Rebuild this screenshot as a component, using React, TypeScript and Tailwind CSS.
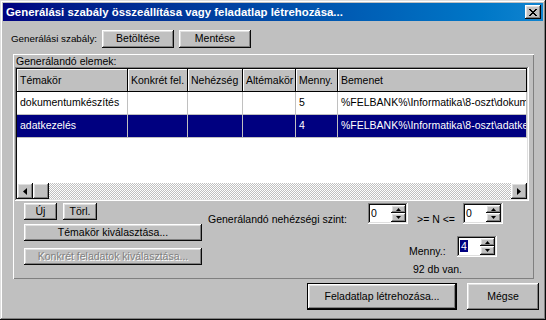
import React from "react";

const frame =
  "shadow-[inset_-1px_-1px_#0a0a0a,inset_1px_1px_#dfdfdf,inset_-2px_-2px_#808080,inset_2px_2px_#ffffff]";
const raised =
  "shadow-[inset_-1px_-1px_#0a0a0a,inset_1px_1px_#ffffff,inset_-2px_-2px_#808080,inset_2px_2px_#dfdfdf]";
const sunken =
  "shadow-[inset_-1px_-1px_#ffffff,inset_1px_1px_#808080,inset_-2px_-2px_#dfdfdf,inset_2px_2px_#0a0a0a]";
const panel = "shadow-[inset_1px_1px_#ffffff,inset_-1px_-1px_#808080]";

const columns = [
  { name: "Témakör", w: "w-[111px]" },
  { name: "Konkrét fel.", w: "w-[60px]" },
  { name: "Nehézség", w: "w-[55px]" },
  { name: "Altémakör", w: "w-[53px]" },
  { name: "Menny.", w: "w-[42px]" },
  { name: "Bemenet", w: "flex-1 min-w-0" },
];

const rows = [
  ["dokumentumkészítés", "", "", "", "5", "%FELBANK%\\Informatika\\8-oszt\\dokumentumkészítés"],
  ["adatkezelés", "", "", "", "4", "%FELBANK%\\Informatika\\8-oszt\\adatkezelés"],
];

function Button({
  className = "",
  disabled = false,
  isDefault = false,
  children,
}: {
  className?: string;
  disabled?: boolean;
  isDefault?: boolean;
  children: React.ReactNode;
}) {
  return (
    <div
      className={`flex shrink-0 items-center justify-center bg-[#c0c0c0] whitespace-nowrap ${
        isDefault ? "border border-black" : ""
      } ${raised} ${disabled ? "text-[#808080] [text-shadow:1px_1px_0_#ffffff]" : ""} ${className}`}
    >
      {children}
    </div>
  );
}

function Triangle({ dir }: { dir: "up" | "down" | "left" | "right" }) {
  const pts = {
    up: "2.5,0 5,3 0,3",
    down: "0,0 5,0 2.5,3",
    left: "4,0 4,7 0,3.5",
    right: "0,0 4,3.5 0,7",
  }[dir];
  const vertical = dir === "up" || dir === "down";
  return (
    <svg width={vertical ? 5 : 4} height={vertical ? 3 : 7} viewBox={vertical ? "0 0 5 3" : "0 0 4 7"}>
      <polygon points={pts} fill="#000" />
    </svg>
  );
}

function CloseGlyph() {
  const px = [
    [0, 0], [1, 0], [6, 0], [7, 0],
    [1, 1], [2, 1], [5, 1], [6, 1],
    [2, 2], [3, 2], [4, 2], [5, 2],
    [3, 3], [4, 3],
    [2, 4], [3, 4], [4, 4], [5, 4],
    [1, 5], [2, 5], [5, 5], [6, 5],
    [0, 6], [1, 6], [6, 6], [7, 6],
  ];
  return (
    <svg width="8" height="7" viewBox="0 0 8 7" shapeRendering="crispEdges">
      {px.map(([x, y]) => (
        <rect key={`${x}-${y}`} x={x} y={y} width="1" height="1" fill="#000" />
      ))}
    </svg>
  );
}

function Spin({ value, selected = false }: { value: string; selected?: boolean }) {
  return (
    <div className={`flex h-[21px] w-[40px] shrink-0 bg-white p-[2px] ${sunken}`}>
      <div className="flex-1 pl-[1px] pt-[1px] leading-[14px]">
        {selected ? <span className="bg-[#000080] px-[1px] text-white">{value}</span> : value}
      </div>
      <div className="flex w-[15px] flex-col">
        <div className={`flex h-[8px] items-center justify-center bg-[#c0c0c0] ${raised}`}>
          <Triangle dir="up" />
        </div>
        <div className={`flex flex-1 items-center justify-center bg-[#c0c0c0] ${raised}`}>
          <Triangle dir="down" />
        </div>
      </div>
    </div>
  );
}

function Grid() {
  return (
    <div className={`ml-[2px] flex h-[134px] w-[514px] flex-col bg-white p-[2px] ${sunken}`}>
      {/* header */}
      <div className="flex h-[23px]">
        {columns.map((c) => (
          <div
            key={c.name}
            className={`flex items-center overflow-hidden whitespace-nowrap border-r border-b border-black bg-[#c0c0c0] pl-[3px] pt-[1px] shadow-[inset_1px_1px_#ffffff] ${c.w}`}
          >
            {c.name}
          </div>
        ))}
      </div>
      {rows.map((r, i) => (
        <div key={i} className={`flex h-[23px] ${i === 1 ? "bg-[#000080] text-white" : ""}`}>
          {r.map((cell, j) => (
            <div
              key={j}
              className={`flex items-center overflow-hidden whitespace-nowrap border-r border-b border-[#c0c0c0] pl-[3px] ${columns[j].w}`}
            >
              {cell}
            </div>
          ))}
        </div>
      ))}
      <div className="flex-1" />
      {/* horizontal scrollbar */}
      <div className="flex h-[16px]">
        <div className={`flex w-[16px] items-center justify-center bg-[#c0c0c0] ${raised}`}>
          <Triangle dir="left" />
        </div>
        <div className={`w-[16px] bg-[#c0c0c0] ${raised}`} />
        <div className="flex-1 bg-[image:repeating-conic-gradient(#c0c0c0_0_25%,#ffffff_0_50%)] bg-[length:2px_2px]" />
        <div className={`flex w-[16px] items-center justify-center bg-[#c0c0c0] ${raised}`}>
          <Triangle dir="right" />
        </div>
      </div>
    </div>
  );
}

export default function App() {
  return (
    <div
      className={`h-[320px] w-[546px] bg-[#c0c0c0] p-[3px] font-['Liberation_Sans',Arial,sans-serif] text-[10.5px] text-black ${frame}`}
    >
      <div className="flex h-[18px] items-center justify-between bg-linear-to-r from-[#000080] to-[#1084d0] pl-[3px] pr-[2px]">
        <span className="text-[11.4px] font-bold leading-[18px] text-white">
          Generálási szabály összeállítása vagy feladatlap létrehozása...
        </span>
        <div className={`flex h-[14px] w-[16px] items-center justify-center bg-[#c0c0c0] ${raised}`}>
          <CloseGlyph />
        </div>
      </div>

      <div className="mt-[9px] flex h-[18px] items-center pl-[8px]">
        <span className="w-[91px] shrink-0 whitespace-nowrap text-[9.8px]">Generálási szabály:</span>
        <Button className="h-[18px] w-[72px]">Betöltése</Button>
        <Button className="ml-[5px] h-[18px] w-[72px]">Mentése</Button>
      </div>

      <div className={`ml-[10px] mt-[6px] h-[225px] w-[521px] pt-[2px] ${panel}`}>
        <div className="h-[11px] pl-[3px] leading-[11px]">Generálandó elemek:</div>
        <Grid />
        <div className="mt-[2px] flex">
          <div className="ml-[11px] flex w-[178px] shrink-0 flex-col">
            <div className="flex gap-[6px]">
              <Button className="h-[17px] w-[33px]">Új</Button>
              <Button className="h-[17px] w-[34px]">Törl.</Button>
            </div>
            <Button className="mt-[4px] h-[17px] w-[178px]">Témakör kiválasztása...</Button>
            <Button disabled className="mt-[7px] h-[17px] w-[178px]">
              Konkrét feladatok kiválasztása...
            </Button>
          </div>
          <div className="ml-[6px] flex flex-col">
            <div className="flex items-start">
              <span className="mt-[10px] w-[160px] shrink-0 leading-[12px] whitespace-nowrap">
                Generálandó nehézségi szint:
              </span>
              <Spin value="0" />
              <span className="ml-[9px] mt-[10px] w-[46px] shrink-0 leading-[12px] whitespace-nowrap">
                &gt;= N &lt;=
              </span>
              <Spin value="0" />
            </div>
            <div className="mt-[11px] flex items-start">
              <span className="ml-[201px] mt-[9px] w-[48px] shrink-0 leading-[12px]">Menny.:</span>
              <Spin value="4" selected />
            </div>
            <div className="ml-[205px] mt-[6px] leading-[12px]">92 db van.</div>
          </div>
        </div>
      </div>

      <div className="mt-[4px] flex justify-end gap-[10px] pr-[4px]">
        <Button isDefault className="h-[27px] w-[150px]">
          Feladatlap létrehozása...
        </Button>
        <Button className="h-[27px] w-[72px]">Mégse</Button>
      </div>
    </div>
  );
}
